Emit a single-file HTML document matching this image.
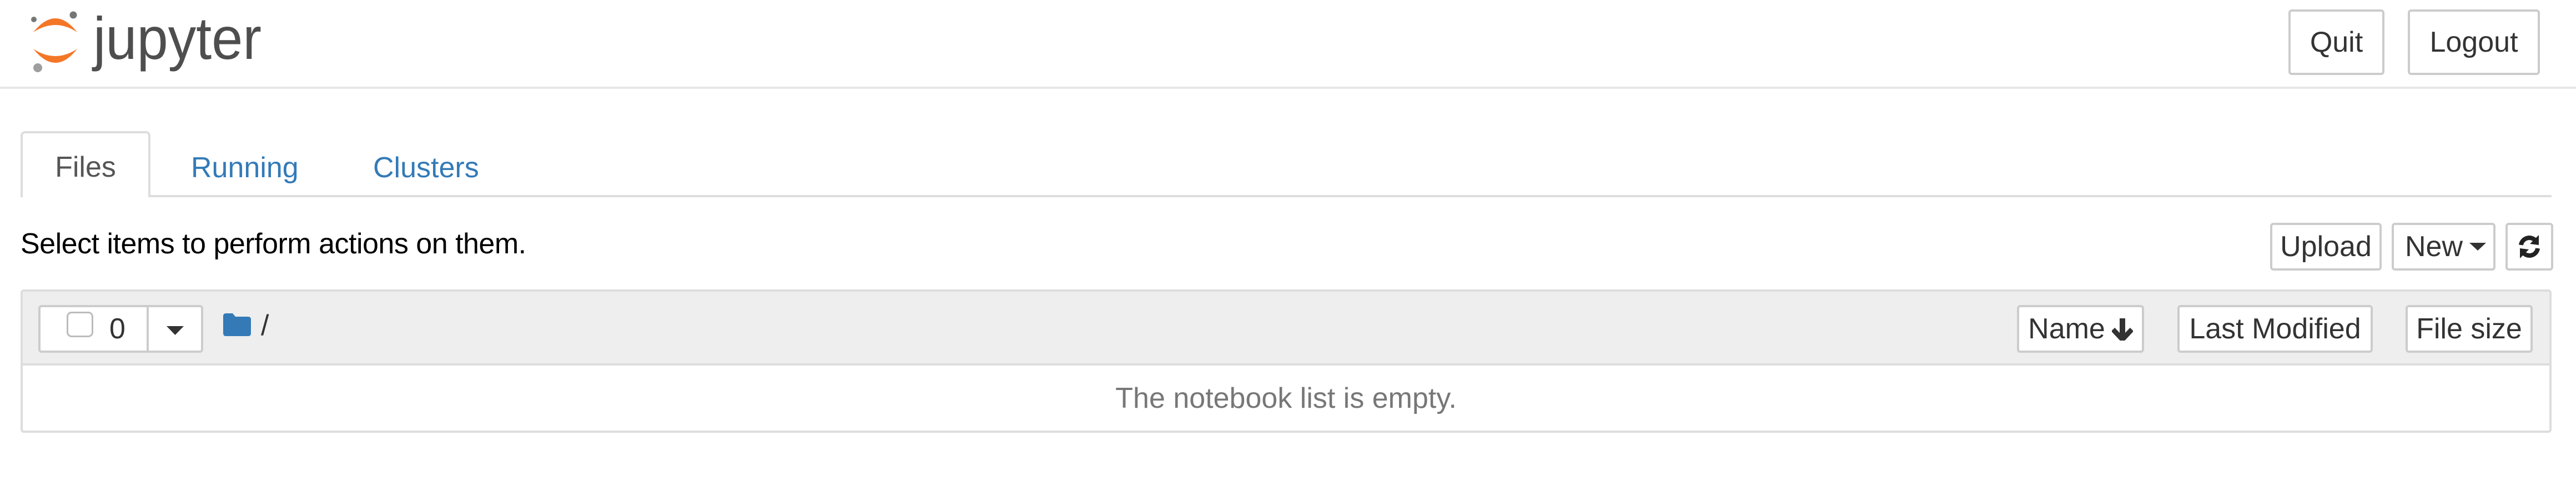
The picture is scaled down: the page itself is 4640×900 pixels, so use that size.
<!DOCTYPE html>
<html><head><meta charset="utf-8"><style>
*{box-sizing:border-box;margin:0;padding:0}
html,body{width:4640px;height:900px;background:#fff;overflow:hidden;position:relative;font-family:"Liberation Sans",Arial,sans-serif;font-size:52px;color:#000}
.a{position:absolute}
.btn{position:absolute;border:4px solid #ccc;border-radius:6px;background:#fff;display:flex;align-items:center;justify-content:center;color:#333;font-size:52px}
</style></head><body>
<!-- header -->
<svg class="a" style="left:0;top:0" width="520" height="150">
  <path d="M60,58 Q100,8 139,58 Q100,32 60,58Z" fill="#f37726"/>
  <path d="M60,88 Q100,138 139,88 Q100,114 60,88Z" fill="#f37726"/>
  <circle cx="61" cy="35" r="5" fill="#767677"/>
  <circle cx="132" cy="27" r="6.5" fill="#767677"/>
  <circle cx="68" cy="122" r="8" fill="#9e9e9e"/>
  <text x="168" y="106" font-family="Liberation Sans,sans-serif" font-size="108" fill="#4e4e4e" textLength="303" lengthAdjust="spacingAndGlyphs">jupyter</text>
</svg>
<div class="btn" style="left:4122px;top:17px;width:173px;height:118px">Quit</div>
<div class="btn" style="left:4337px;top:17px;width:238px;height:118px">Logout</div>
<div class="a" style="left:0;top:156px;width:4640px;height:4px;background:#e7e7e7"></div>

<!-- tabs -->
<div class="a" style="left:37px;top:351px;width:4559px;height:4px;background:#ddd"></div>
<div class="a" style="left:37px;top:236px;width:234px;height:119px;border:4px solid #ddd;border-bottom:none;border-radius:8px 8px 0 0;background:#fff;display:flex;align-items:center;justify-content:center;color:#555;padding-top:6px">Files</div>
<div class="a" style="left:344px;top:272px;color:#337ab7">Running</div>
<div class="a" style="left:672px;top:272px;color:#337ab7">Clusters</div>

<div class="a" style="left:37px;top:409px;color:#000;letter-spacing:-0.5px">Select items to perform actions on them.</div>

<div class="btn" style="left:4089px;top:401px;width:201px;height:86px">Upload</div>
<div class="btn" style="left:4308px;top:401px;width:187px;height:86px;justify-content:flex-start;padding-left:20px">New<svg width="34" height="18" style="margin-left:12px"><path d="M0,2 L30,2 L15,16Z" fill="#333"/></svg></div>
<div class="btn" style="left:4513px;top:401px;width:86px;height:86px">
<svg width="46" height="46" viewBox="0 0 46 46"><path d="M8,20 A15,15 0 0 1 34,12" stroke="#222" stroke-width="8" fill="none"/><path d="M40,2 L40,20 L24,18Z" fill="#222"/><path d="M38,26 A15,15 0 0 1 12,34" stroke="#222" stroke-width="8" fill="none"/><path d="M6,44 L6,26 L22,28Z" fill="#222"/></svg></div>

<!-- list panel -->
<div class="a" style="left:37px;top:521px;width:4559px;height:258px;border:4px solid #ddd;border-radius:6px;overflow:hidden">
  <div style="height:133px;background:#eee;border-bottom:4px solid #ddd"></div>
  <div style="height:117px;display:flex;align-items:center;justify-content:center;color:#777">The notebook list is empty.</div>
</div>
<div class="a" style="left:69px;top:549px;width:297px;height:86px;border:4px solid #ccc;border-radius:6px;background:#fff"></div>
<div class="a" style="left:264px;top:549px;width:4px;height:86px;background:#ccc"></div>
<div class="a" style="left:120px;top:561px;width:48px;height:46px;border:3px solid #bbb;border-radius:9px;background:#fff"></div>
<div class="a" style="left:197px;top:562px;color:#333">0</div>
<svg class="a" style="left:300px;top:586px" width="32" height="18"><path d="M0,1 L31,1 L15.5,17Z" fill="#333"/></svg>
<svg class="a" style="left:402px;top:564px" width="50" height="41"><path d="M0,5 Q0,0 5,0 L17,0 L22,6 L45,6 Q50,6 50,11 L50,36 Q50,41 45,41 L5,41 Q0,41 0,36Z" fill="#337ab7"/></svg>
<div class="a" style="left:470px;top:556px;color:#333">/</div>

<div class="btn" style="left:3633px;top:549px;width:229px;height:86px">Name<svg width="38" height="42" style="margin-left:12px" viewBox="0 0 38 42"><path d="M19,2 L19,34" stroke="#333" stroke-width="10"/><path d="M2,22 L19,40 L36,22" stroke="#333" stroke-width="9" fill="none" stroke-linejoin="miter"/></svg></div>
<div class="btn" style="left:3922px;top:549px;width:352px;height:86px">Last Modified</div>
<div class="btn" style="left:4333px;top:549px;width:229px;height:86px">File size</div>
</body></html>
